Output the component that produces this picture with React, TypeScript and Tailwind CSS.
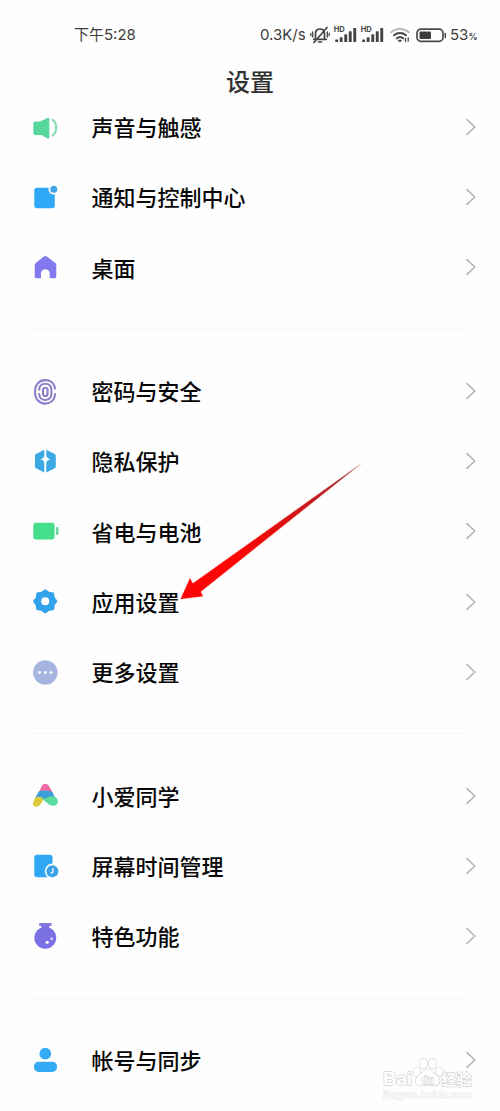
import type { ReactNode } from 'react';

type SettingItem = { label: string; icon: ReactNode };

const SoundIcon = () => (
  <>
    <path
      d="M4.3 7.5H9L16.4 4c1-.5 1.900 0 1.900 1v18.600c0 1-1 1.400-1.800.8L10.500 21H4.300c-1.200 0-2-.8-2-2V9.500c0-1.200.8-2 2-2z"
      fill="#55d69a"
    />
    <path
      d="M21.600 5.900c4.800 3 4.800 12 0 15.400"
      fill="none"
      stroke="#86dbb5"
      strokeWidth="2.200"
      strokeLinecap="round"
    />
  </>
);

const NotificationIcon = () => (
  <>
    <rect x="3.300" y="3.700" width="20.500" height="20.500" rx="2.600" fill="#2fa8f8" />
    <circle cx="22.700" cy="5.300" r="5.200" fill="#fefefe" />
    <circle cx="22.700" cy="5.300" r="3.500" fill="#43a5e6" />
  </>
);

const HomeIcon = () => (
  <path
    d="M13 2.500c.8-.7 2-.7 2.800 0l8.200 6.200c.9.700 1.300 1.500 1.300 2.600v10.900c0 1.300-.8 2.100-2.100 2.100H18.700v-5c0-5.500-8.700-5.500-8.700 0v5H5.800c-1.300 0-2.100-.8-2.100-2.100V11.300c0-1.100.4-1.900 1.300-2.600z"
    fill="#8279ee"
  />
);

const FingerprintIcon = () => (
  <g fill="none" stroke="#8c80cb" strokeWidth="2.100" strokeLinecap="round">
    <rect x="12" y="9.700" width="4.600" height="8.300" rx="2.300" />
    <path d="M8.200 11.800c0-3.900 2.600-6.100 6.100-6.100s6.100 2.400 6.100 6.100v4c0 3.800-2.600 6.200-6.100 6.200s-6.100-2.400-6.100-6" />
    <path d="M24.200 10.500C23.500 5.300 19.400 2.100 14.300 2.100 8.400 2.100 4 6.400 4 13.900s4.400 11.700 10.300 11.700c5.200 0 9.300-3.500 9.900-9.500" />
  </g>
);

const PrivacyIcon = () => (
  <>
    <path
      d="M13.300 1.700v22.700L5 20.300c-.7-.4-1-.9-1-1.700V7.700c0-.8.300-1.300 1-1.700zM15.300 1.700v22.700l8.500-4.100c.7-.4 1-.9 1-1.700V7.700c0-.8-.3-1.300-1-1.700z"
      fill="#3ca9e5"
    />
    <path
      d="M14.400 5.500c.8 3.300 1.900 4.900 5.300 5.800-3.400.9-4.500 2.400-5.300 5.700-.8-3.300-1.900-4.800-5.300-5.700 3.400-.9 4.500-2.500 5.300-5.800z"
      fill="#fefefe"
    />
  </>
);

const BatterySaverIcon = () => (
  <>
    <rect x="2.300" y="4.700" width="21.300" height="16.700" rx="2.600" fill="#45df8b" />
    <rect x="24.900" y="9" width="2.600" height="8" rx="1.200" fill="#69d69d" />
  </>
);

const GearIcon = () => (
  <>
    <g fill="#32a2ea">
      <circle cx="14.200" cy="13.300" r="10.300" />
      {[0, 45, 90, 135, 180, 225, 270, 315].map((angle) => (
        <path
          key={angle}
          d="M9.800 4.500 13 1.700q1.200-.9 2.400 0L18.600 4.500z"
          transform={`rotate(${angle} 14.200 13.300)`}
        />
      ))}
    </g>
    <circle cx="14.200" cy="13.300" r="4" fill="#fefefe" />
  </>
);

const MoreIcon = () => (
  <>
    <circle cx="14.300" cy="13.500" r="12.200" fill="#a6b5e0" />
    <g fill="#fff">
      <circle cx="8.500" cy="13.500" r="1.400" />
      <circle cx="14.300" cy="13.500" r="1.400" />
      <circle cx="20.100" cy="13.500" r="1.400" />
    </g>
  </>
);

const XiaoAiIcon = () => (
  <>
    <path d="M10.900 3.700c1.500-2.700 5.300-2.700 6.900 0l4.500 8.100-15.500 1z" fill="#ee6aa5" />
    <path d="M7.600 9.600c3.600-1.600 9.800-1.400 13.700.3l4.600 9.300L14 18 3.800 17z" fill="#3f9fdb" />
    <path d="M4.300 15.600c2.500-1.600 7-1.200 7.900 1-.7 4-3.400 8.100-6.900 8.100-3 0-4.100-2.800-2.900-5.200z" fill="#dfca3d" />
    <path d="M10 16.900c1.800-.2 3.300.2 5.300-.9 3.600-2.500 8.800-2.400 10.800.8 2.300 4.200-.8 7.600-4.700 6.900C16.200 22.800 15 18.300 10 16.900z" fill="#5bdc9c" />
  </>
);

const ScreenTimeIcon = () => (
  <>
    <rect x="3.300" y="1.700" width="18.200" height="22.600" rx="2.700" fill="#2fa7f5" />
    <circle cx="21.400" cy="18.200" r="7.600" fill="#fefefe" />
    <circle cx="21.400" cy="18.200" r="6" fill="#3aa2e8" />
    <path d="M21.900 15.500v3.600l-1.800 1" fill="none" stroke="#fff" strokeWidth="1.300" strokeLinecap="round" />
  </>
);

const FlaskIcon = () => (
  <>
    <rect x="8" y="0" width="12.700" height="3" rx="1.200" fill="#8279d8" />
    <path d="M10.500 2h7.600v3.300h-7.600z" fill="#7a70e0" />
    <circle cx="14.300" cy="14.800" r="10.900" fill="#7b70e4" />
    <circle cx="16.200" cy="19.300" r="1.600" fill="#fff" />
    <circle cx="20.700" cy="15.700" r="1.200" fill="#e6e2ff" />
  </>
);

const AccountIcon = () => (
  <>
    <circle cx="14.300" cy="7.700" r="5.900" fill="#34abf4" />
    <rect x="3" y="15.700" width="23" height="10.200" rx="4.600" fill="#34abf4" />
  </>
);

const GROUPS: SettingItem[][] = [
  [
    { label: '声音与触感', icon: <SoundIcon /> },
    { label: '通知与控制中心', icon: <NotificationIcon /> },
    { label: '桌面', icon: <HomeIcon /> },
  ],
  [
    { label: '密码与安全', icon: <FingerprintIcon /> },
    { label: '隐私保护', icon: <PrivacyIcon /> },
    { label: '省电与电池', icon: <BatterySaverIcon /> },
    { label: '应用设置', icon: <GearIcon /> },
    { label: '更多设置', icon: <MoreIcon /> },
  ],
  [
    { label: '小爱同学', icon: <XiaoAiIcon /> },
    { label: '屏幕时间管理', icon: <ScreenTimeIcon /> },
    { label: '特色功能', icon: <FlaskIcon /> },
  ],
  [{ label: '帐号与同步', icon: <AccountIcon /> }],
];

const MutedBell = () => (
  <svg className="ml-[3px] h-[18px] w-[20px]" viewBox="0 0 20 18" fill="none" stroke="#444" strokeWidth="1.700" strokeLinecap="round">
    <path d="M3.700 13.300h12.600M5.500 13V7.500C5.500 4.500 7.500 3 10 3s4.500 1.500 4.500 4.500V13M8.500 16h3M4 16.500 17 1.500" />
    <path d="M2.700 6v5M.8 7.300v2.400M17.300 6v5M19.200 7.300v2.400" strokeWidth="1.300" />
  </svg>
);

const Signal = () => (
  <svg className="h-[16px] w-[23px] overflow-visible" viewBox="0 0 23 16" fill="#444">
    <text x="-.3" y="5" fontSize="7.500" fontWeight="700" fontFamily="Inter, sans-serif">
      HD
    </text>
    <rect x="1.200" y="12.500" width="2.900" height="2.600" rx=".6" />
    <rect x="5.700" y="10.300" width="2.900" height="4.800" rx=".6" />
    <rect x="10.300" y="7.300" width="2.900" height="7.800" rx=".6" />
    <rect x="14.800" y="4.300" width="2.900" height="10.800" rx=".6" />
    <rect x="19.300" y="1" width="2.900" height="14.100" rx=".6" />
  </svg>
);

const Wifi = () => (
  <svg className="ml-[6px] h-[16px] w-[20px]" viewBox="0 0 20 16" fill="none" strokeLinecap="round" strokeWidth="1.900">
    <path d="M1.200 5.200c5-4.500 12.600-4.500 17.600 0" stroke="#b4b4b4" />
    <path d="M4 8.300c3.500-3 8.500-3 12 0M6.800 11.300c2-1.600 4.400-1.600 6.400 0" stroke="#444" />
    <path d="M8.500 13.200h3L10 14.800z" fill="#444" stroke="#444" strokeWidth="1" />
    <path d="M15.500 11.500v3.200M18.200 11v3.200" stroke="#444" strokeWidth="1.300" />
  </svg>
);

const Battery = () => (
  <svg className="ml-[6px] h-[15px] w-[31px]" viewBox="0 0 31 15">
    <rect x="1" y="1.200" width="26" height="12.100" rx="3.800" fill="none" stroke="#4a4a4a" strokeWidth="1.700" />
    <rect x="3.500" y="3.500" width="11.500" height="7.500" rx="1.200" fill="#3e3e3e" />
    <path d="M29.300 5.500v4" stroke="#4a4a4a" strokeWidth="1.500" strokeLinecap="round" />
  </svg>
);

const StatusBar = () => (
  <div className="flex h-[70px] items-center justify-between pr-[24px] pl-[74px] text-[15px] text-[#3c3c3c]">
    <span className="font-['Inter','Noto_Sans_CJK_SC',sans-serif]">下午5:28</span>
    <div className="flex items-center font-['Inter','Noto_Sans_CJK_SC',sans-serif]">
      <span className="w-[47px] whitespace-nowrap">0.3K/s</span>
      <MutedBell />
      <span className="ml-[4px] flex gap-[4px]">
        <Signal />
        <Signal />
      </span>
      <Wifi />
      <Battery />
      <span className="ml-[3px] flex w-[26px] items-baseline whitespace-nowrap">
        53<span className="text-[9px] font-semibold">%</span>
      </span>
    </div>
  </div>
);

const SettingRow = ({ label, icon }: SettingItem) => (
  <li className="flex h-[70.250px] items-center pl-[31px] pr-[24px]">
    <svg className="h-[28px] w-[28px] shrink-0 overflow-visible" viewBox="0 0 28 28">
      {icon}
    </svg>
    <span className="ml-[32.600px] flex-1 pb-[3px] text-[22px] leading-[30px] font-medium text-[#080808]">
      {label}
    </span>
    <svg className="mb-[1.500px] h-[18px] w-[11px] shrink-0" viewBox="0 0 11 18" fill="none" stroke="#b8b8b8" strokeWidth="1.700">
      <path d="M1.500 1.200 9.700 9l-8.200 7.800" />
    </svg>
  </li>
);

const PointerArrow = () => (
  <svg className="absolute top-[460px] left-[176px] h-[144px] w-[190px]" viewBox="176 460 190 144">
    <defs>
      <linearGradient id="arrow" x1="1" y1="0" x2="0" y2="1">
        <stop offset="0" stopColor="#8d4a50" />
        <stop offset=".25" stopColor="#c01c20" />
        <stop offset=".5" stopColor="#e80c0c" />
        <stop offset=".7" stopColor="#fd0505" />
      </linearGradient>
    </defs>
    <path
      d="M361 463.800 192.800 583.400 190 578.300 180.600 599 203 596.200 200.600 591.700z"
      fill="url(#arrow)"
      stroke="#ffb9a8"
      strokeOpacity=".45"
      strokeWidth="1.400"
      paintOrder="stroke"
    />
  </svg>
);

const Watermark = () => (
  <svg
    className="absolute top-[1052px] left-[380px] h-[52px] w-[98px]"
    viewBox="0 0 98 52"
    fill="#fff"
    stroke="#d4d4d4"
    strokeWidth="1.300"
    paintOrder="stroke"
    fontFamily="'Liberation Sans', 'Noto Sans CJK SC', sans-serif"
  >
    <ellipse cx="36.800" cy="20" rx="3.300" ry="4.300" />
    <ellipse cx="43.300" cy="11.500" rx="3.800" ry="5" />
    <ellipse cx="52.500" cy="11.500" rx="3.800" ry="5" />
    <ellipse cx="59.500" cy="19.500" rx="3.300" ry="4.300" />
    <path d="M47.800 17.500c4.500 0 5.500 3.500 8.700 6 5.500 4.200 3 10.300-2.500 10-4.500-.4-8-.4-12.500 0-6 .3-8-5.800-2.500-10 3.300-2.500 4.300-6 8.800-6z" />
    <text x="3" y="32.500" fontSize="18" fontWeight="700" textLength="29" lengthAdjust="spacingAndGlyphs">
      Bai
    </text>
    <text x="41.500" y="31.500" fontSize="11" fontWeight="700" textLength="12" lengthAdjust="spacingAndGlyphs" stroke="#cbcbcb">
      du
    </text>
    <text x="61.500" y="32.500" fontSize="15" fontWeight="700" textLength="30">
      经验
    </text>
    <text x="3" y="45.500" fontSize="9" stroke="#e6e6e6" strokeWidth="1" textLength="88" lengthAdjust="spacingAndGlyphs">
      jingyan.baidu.com
    </text>
  </svg>
);

const App = () => (
  <div className="relative h-[1111px] w-[500px] overflow-hidden bg-[#fefefe] font-['Noto_Sans_CJK_SC',sans-serif]">
    <StatusBar />
    <h1 className="h-[22.400px] text-center text-[24px] leading-[22px] font-medium text-[#303030]">
      设置
    </h1>
    {GROUPS.map((items, index) => (
      <section key={items[0].label}>
        {index > 0 && (
          <div className="flex h-[53.400px] items-center pl-[33px] pr-[30px] pb-[1px]">
            <div className="h-px w-full bg-[#f6f6f6]" />
          </div>
        )}
        <ul>
          {items.map((item) => (
            <SettingRow key={item.label} {...item} />
          ))}
        </ul>
      </section>
    ))}
    <PointerArrow />
    <Watermark />
  </div>
);

export default App;
